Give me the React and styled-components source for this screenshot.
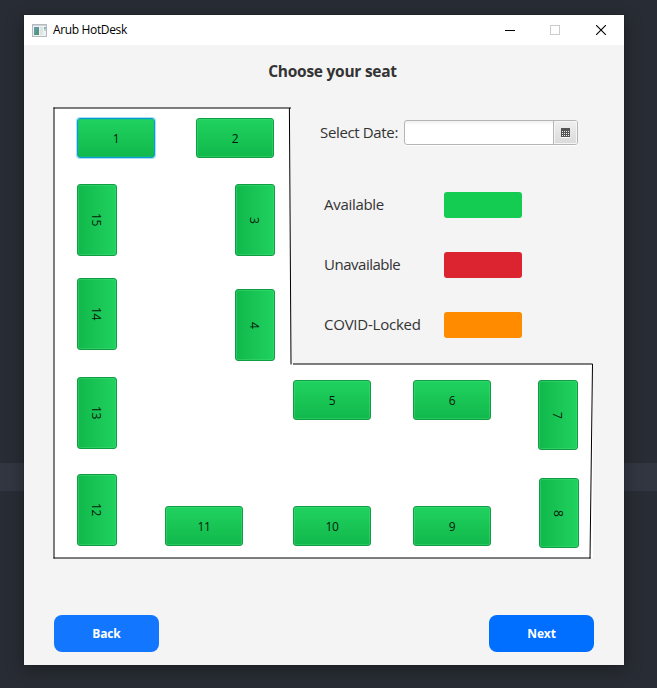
import React from "react";
import styled, { createGlobalStyle, css } from "styled-components";

const GlobalStyle = createGlobalStyle`
  * { box-sizing: border-box; }
  body {
    margin: 0;
    overflow: hidden;
    font-family: "Open Sans", "Noto Sans", sans-serif;
  }
`;

const Desktop = styled.div`
  width: 657px;
  height: 688px;
  padding: 15px 33px 23px 24px;
  background: linear-gradient(#282c34 463px, #313641 463px, #313641 491px, #282c34 491px);
`;

const Window = styled.main`
  display: flex;
  flex-direction: column;
  width: 600px;
  height: 650px;
  background: #f4f4f4;
  box-shadow: 0 0 1px rgba(0, 0, 0, 0.5), 0 4px 16px rgba(0, 0, 0, 0.34);
`;

const TitleBar = styled.header`
  display: flex;
  align-items: center;
  height: 30px;
  padding-left: 8px;
  background: #fff;
`;

const WindowTitle = styled.span`
  flex: 1;
  margin-left: 6px;
  font-size: 12px;
  line-height: 16px;
  letter-spacing: -0.35px;
  color: #000;
`;

const WindowControl = styled.button`
  display: grid;
  place-items: center;
  width: ${(p) => p.$width}px;
  height: 28px;
  padding: 0;
  border: 0;
  background: none;
`;

const Heading = styled.h1`
  margin: 14px 0 0 17px;
  height: 24px;
  font-size: 15.5px;
  line-height: 24px;
  font-weight: 700;
  letter-spacing: -0.26px;
  text-align: center;
  color: #333;
`;

const Workspace = styled.section`
  display: grid;
  grid-template: 452px / 540px;
  margin: 24px 0 0 29px;
`;

const FloorPlan = styled.div`
  grid-area: 1 / 1;
  position: relative;
`;

const Walls = styled.svg`
  display: block;
`;

const Seat = styled.button`
  position: absolute;
  left: ${(p) => p.$x}px;
  top: ${(p) => p.$y}px;
  display: flex;
  align-items: center;
  justify-content: center;
  padding: 1px 0 0;
  width: ${(p) => (p.$long ? 40 : 78)}px;
  height: ${(p) => p.$long || 40}px;
  border: 1px solid #109c43;
  border-radius: 3px;
  background: linear-gradient(${(p) => (p.$long ? "to left" : "to bottom")}, #20d25f, #11b84b);
  box-shadow: inset 0 0 0 1px rgba(70, 224, 122, 0.42);
  font: 12px/16px "Open Sans", sans-serif;
  letter-spacing: -0.3px;
  color: #04180a;
  ${(p) => p.$long && css`
    padding: 0 2px 0 0;
    writing-mode: vertical-rl;
    text-orientation: sideways;
  `}
  ${(p) => p.$focused && css`
    border-color: #0a9bd0;
    box-shadow: 0 0 0 1px #a9dff5, inset 0 0 0 1px rgba(20, 190, 150, 0.45);
  `}
`;

const Panel = styled.aside`
  grid-area: 1 / 1;
  justify-self: end;
  align-self: start;
  width: 273px;
  padding-top: 13px;
  z-index: 1;
`;

const DateRow = styled.label`
  display: flex;
  align-items: center;
  height: 25px;
`;

const Label = styled.span`
  width: ${(p) => p.$width}px;
  padding-bottom: 2px;
  font-size: 15px;
  line-height: 24px;
  letter-spacing: ${(p) => p.$tracking}px;
  white-space: nowrap;
  color: #333;
`;

const DatePicker = styled.span`
  display: flex;
  width: 174px;
  height: 25px;
  border: 1px solid #b5b5b5;
  border-radius: 3px;
  background: linear-gradient(#f0f0f0, #fff 4px);
  box-shadow: 0 1px 0 #fff;
`;

const DateInput = styled.input`
  flex: 1;
  min-width: 0;
  border: 0;
  padding: 0 6px;
  background: transparent;
`;

const CalendarButton = styled.span`
  display: grid;
  place-items: center;
  width: 24px;
  border-left: 1px solid #b5b5b5;
  border-radius: 0 2px 2px 0;
  background: linear-gradient(#efefef, #dadada);
  box-shadow: inset 0 0 0 1px #f5f5f5;
`;

const Legend = styled.ul`
  display: grid;
  gap: 34px;
  margin: 47px 0 0 4px;
  padding: 0;
  list-style: none;
`;

const LegendItem = styled.li`
  display: flex;
  align-items: center;
  height: 26px;
`;

const Swatch = styled.span`
  width: 78px;
  height: 26px;
  border-radius: 3px;
  background: ${(p) => p.$color};
`;

const Actions = styled.footer`
  display: flex;
  justify-content: space-between;
  margin: 56px 30px 0;
`;

const ActionButton = styled.button`
  width: 105px;
  height: 37px;
  padding: 0;
  border: 0;
  border-radius: 8px;
  background: ${(p) => p.$color};
  font: 700 12px/16px "Open Sans", sans-serif;
  letter-spacing: -0.15px;
  color: #fff;
`;

const seats = [
  { id: 1, x: 24, y: 11, focused: true },
  { id: 2, x: 143, y: 11 },
  { id: 3, x: 182, y: 77, long: 72 },
  { id: 4, x: 182, y: 182, long: 72 },
  { id: 5, x: 240, y: 273 },
  { id: 6, x: 360, y: 273 },
  { id: 7, x: 485, y: 273, long: 70 },
  { id: 8, x: 486, y: 371, long: 70 },
  { id: 9, x: 360, y: 399 },
  { id: 10, x: 240, y: 399 },
  { id: 11, x: 112, y: 399 },
  { id: 12, x: 24, y: 367, long: 72 },
  { id: 13, x: 24, y: 270, long: 72 },
  { id: 14, x: 24, y: 171, long: 72 },
  { id: 15, x: 24, y: 77, long: 72 },
];

const statuses = [
  { name: "Available", color: "#14cc52", tracking: -0.3 },
  { name: "Unavailable", color: "#dc2430", tracking: -0.48 },
  { name: "COVID-Locked", color: "#ff8c00", tracking: -0.23 },
];

const AppIcon = () => (
  <svg width="15" height="13" viewBox="0 0 15 13" shapeRendering="crispEdges">
    <defs>
      <linearGradient id="pane" x1="0" y1="0" x2="1" y2="1">
        <stop offset="0" stopColor="#6f9bbd" />
        <stop offset="1" stopColor="#469563" />
      </linearGradient>
    </defs>
    <rect width="15" height="13" fill="#b4babd" />
    <rect x="1" y="1" width="13" height="11" fill="#edf1f2" />
    <rect x="1" y="1" width="13" height="1" fill="#ccd4d8" />
    <rect x="2" y="3" width="5" height="8" fill="url(#pane)" />
    <rect x="8" y="3" width="3" height="8" fill="#dfe3e4" />
    <rect x="12" y="3" width="2" height="2" fill="#8cb5c4" />
    <rect x="12" y="5" width="2" height="2" fill="#b7dcc4" />
  </svg>
);

const CalendarIcon = () => (
  <svg width="9" height="10" viewBox="0 0 9 10" shapeRendering="crispEdges">
    <rect y="9" width="9" height="1" fill="#fff" />
    <rect width="9" height="9" fill="#555" />
    {[3, 5, 7].map((y) =>
      [1, 3, 5, 7].map((x) => (
        <rect key={`${x}-${y}`} x={x} y={y} width="1" height="1" fill="#eee" />
      ))
    )}
  </svg>
);

export default function App() {
  return (
    <>
      <GlobalStyle />
      <Desktop>
        <Window>
          <TitleBar>
            <AppIcon />
            <WindowTitle>Arub HotDesk</WindowTitle>
            <WindowControl $width={44} aria-label="Minimize">
              <svg width="10" height="10" shapeRendering="crispEdges">
                <path d="M0 5.5H10" stroke="#000" />
              </svg>
            </WindowControl>
            <WindowControl $width={46} aria-label="Maximize" disabled>
              <svg width="10" height="10" shapeRendering="crispEdges">
                <rect x=".5" y=".5" width="9" height="9" fill="none" stroke="#ccc" />
              </svg>
            </WindowControl>
            <WindowControl $width={46} aria-label="Close">
              <svg width="10" height="10">
                <path d="M0 0L10 10M10 0L0 10" stroke="#000" strokeWidth="1.1" />
              </svg>
            </WindowControl>
          </TitleBar>
          <Heading>Choose your seat</Heading>
          <Workspace>
            <FloorPlan>
              <Walls width="540" height="452">
                <path d="M1 1H237L238 257H540V451H1Z" fill="#fff" />
                <path
                  d="M.5 1H238M236.4 1L238 257.5M240 257H539.5L537 451.5M537.5 451H.5M1 .5V451.5"
                  fill="none"
                  stroke="#000"
                />
              </Walls>
              {seats.map((s) => (
                <Seat key={s.id} $x={s.x} $y={s.y} $long={s.long} $focused={s.focused}>
                  {s.id}
                </Seat>
              ))}
            </FloorPlan>
            <Panel>
              <DateRow>
                <Label $width={84} $tracking={-0.35}>Select Date:</Label>
                <DatePicker>
                  <DateInput aria-label="Date" />
                  <CalendarButton>
                    <CalendarIcon />
                  </CalendarButton>
                </DatePicker>
              </DateRow>
              <Legend>
                {statuses.map((s) => (
                  <LegendItem key={s.name}>
                    <Label $width={120} $tracking={s.tracking}>{s.name}</Label>
                    <Swatch $color={s.color} />
                  </LegendItem>
                ))}
              </Legend>
            </Panel>
          </Workspace>
          <Actions>
            <ActionButton $color="#1276ff">Back</ActionButton>
            <ActionButton $color="#006eff">Next</ActionButton>
          </Actions>
        </Window>
      </Desktop>
    </>
  );
}
